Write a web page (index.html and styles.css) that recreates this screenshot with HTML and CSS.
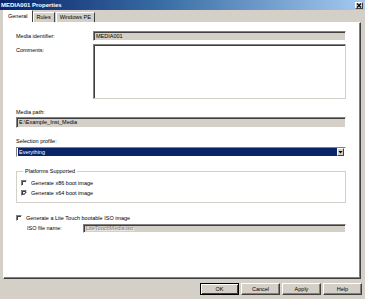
FILE: index.html
```html
<!DOCTYPE html>
<html lang="en">
<head>
    <meta charset="UTF-8">
    <meta name="viewport" content="width=device-width, initial-scale=1.0">
    <title>MEDIA001 Properties</title>
    <link rel="stylesheet" href="styles.css">
</head>
<body>
    <div class="window">
        <div class="titlebar">
            <span class="title">MEDIA001 Properties</span>
            <span class="close-btn">
                <svg width="6" height="5" viewBox="0 0 6 5"><path d="M1 0.5 L5 4.5 M5 0.5 L1 4.5" stroke="#000" stroke-width="1.1"/></svg>
            </span>
        </div>

        <div class="tabs">
            <div class="tab active">General</div>
            <div class="tab">Rules</div>
            <div class="tab">Windows PE</div>
        </div>

        <div class="panel">
            <div class="row first">
                <label class="label">Media identifier:</label>
                <div class="field disabled">MEDIA001</div>
            </div>

            <div class="row top">
                <label class="label pad">Comments:</label>
                <div class="field textarea"></div>
            </div>

            <div class="caption gap">Media path:</div>
            <div class="field disabled wide">E:\Example_Inst_Media</div>

            <div class="caption gap">Selection profile:</div>
            <div class="dropdown">
                <span class="selected">Everything</span>
                <span class="drop-btn">
                    <svg width="5" height="3" viewBox="0 0 5 3"><path d="M0.5 0 L4.5 0 L2.5 2.5 Z" fill="#000"/></svg>
                </span>
            </div>

            <fieldset class="group">
                <legend>Platforms Supported</legend>
                <div class="check-row">
                    <span class="checkbox"></span>
                    <span>Generate x86 boot image</span>
                </div>
                <div class="check-row">
                    <span class="checkbox">
                        <svg width="5" height="5" viewBox="0 0 5 5"><path d="M0.6 2.2 L1.9 3.6 L4.4 0.9" stroke="#000" stroke-width="1" fill="none"/></svg>
                    </span>
                    <span>Generate x64 boot image</span>
                </div>
            </fieldset>

            <div class="check-row lite">
                <span class="checkbox"></span>
                <span>Generate a Lite Touch bootable ISO image</span>
            </div>

            <div class="row iso">
                <label class="label small">ISO file name:</label>
                <div class="field disabled greyed">LiteTouchMedia.iso</div>
            </div>
        </div>

        <div class="buttons">
            <button class="default">OK</button>
            <button>Cancel</button>
            <button>Apply</button>
            <button>Help</button>
        </div>
    </div>
</body>
</html>
```

FILE: styles.css
```css
html, body {
    margin: 0;
    padding: 0;
}
body {
    font-family: "Liberation Sans", Arial, sans-serif;
    font-size: 5.5px;
    color: #000;
    background: #d4d0c8;
    width: 365px;
    height: 299px;
    overflow: hidden;
}
.window {
    display: flex;
    flex-direction: column;
    height: 299px;
}
.titlebar {
    height: 10px;
    display: flex;
    align-items: center;
    justify-content: space-between;
    padding: 0 2px 0 1px;
    background: linear-gradient(to right, #0a246a, #3a6ea5 45%, #a6caf0);
}
.title {
    color: #fff;
    font-weight: bold;
    font-size: 6px;
    line-height: 10px;
}
.close-btn {
    width: 8px;
    height: 7px;
    display: flex;
    align-items: center;
    justify-content: center;
    background: #d4d0c8;
    border: 1px solid;
    border-color: #fff #404040 #404040 #fff;
    box-sizing: border-box;
}
.tabs {
    height: 12px;
    display: flex;
    align-items: flex-end;
    padding-left: 3px;
}
.tab {
    height: 10px;
    line-height: 9px;
    padding: 0 3px;
    border: 1px solid;
    border-color: #fff #404040 transparent #fff;
    border-bottom: none;
    box-sizing: border-box;
    margin-right: 1px;
    background: #d4d0c8;
}
.tab.active {
    height: 12px;
    line-height: 11px;
    padding: 0 4px;
    background: #fff;
    margin-right: 0;
}
.panel {
    height: 257px;
    margin: 0 4px 0 3px;
    background: #fff;
    border: 1px solid;
    border-color: #fff #404040 #404040 #fff;
    box-shadow: inset -1px -1px 0 #808080;
    box-sizing: border-box;
    padding: 0 14px 0 12px;
}
.row {
    display: flex;
    align-items: center;
    height: 10px;
}
.row.first {
    margin-top: 8px;
}
.row.top {
    align-items: flex-start;
    height: auto;
    margin-top: 3px;
}
.label {
    width: 77px;
    flex: none;
    line-height: 7px;
}
.label.pad {
    padding-top: 3px;
}
.label.small {
    width: 56px;
    padding-left: 11px;
}
.field {
    flex: 1;
    height: 10px;
    line-height: 8px;
    padding-left: 2px;
    box-sizing: border-box;
    border: 1px solid;
    border-color: #808080 #fff #fff #808080;
    box-shadow: inset 1px 1px 0 #404040;
    white-space: nowrap;
    overflow: hidden;
}
.field.disabled {
    background: #d4d0c8;
}
.field.textarea {
    height: 55px;
    background: #fff;
    border-color: #808080 #d4d0c8 #d4d0c8 #808080;
}
.field.wide {
    height: 11px;
    line-height: 9px;
    margin-top: 1px;
}
.field.greyed {
    color: #808080;
    text-shadow: 1px 1px 0 #fff;
}
.caption {
    line-height: 7px;
}
.caption.gap {
    margin-top: 10px;
}
.dropdown {
    margin-top: 2px;
    height: 10px;
    display: flex;
    align-items: center;
    box-sizing: border-box;
    border: 1px solid;
    border-color: #808080 #fff #fff #808080;
    background: #fff;
    padding: 0 1px 0 1px;
}
.selected {
    flex: 1;
    background: #0a246a;
    color: #fff;
    height: 8px;
    line-height: 8px;
    padding-left: 1px;
}
.drop-btn {
    width: 7px;
    height: 8px;
    display: flex;
    align-items: center;
    justify-content: center;
    box-sizing: border-box;
    background: #d4d0c8;
    border: 1px solid;
    border-color: #fff #404040 #404040 #fff;
}
.group {
    margin: 11px 0 0 0;
    padding: 3px 0 5px 4px;
    border: 1px solid #d4d0c8;
    height: 35px;
    box-sizing: border-box;
}
.group legend {
    padding: 0 2px;
    margin-left: 2px;
    line-height: 7px;
}
.check-row {
    display: flex;
    align-items: center;
    gap: 4px;
    height: 10px;
    line-height: 7px;
}
.checkbox {
    width: 6px;
    height: 6px;
    flex: none;
    box-sizing: border-box;
    border: 1px solid;
    border-color: #808080 #fff #fff #808080;
    box-shadow: inset 1px 1px 0 #404040, 0 0 0 0 #d4d0c8;
    background: #fff;
    display: flex;
    align-items: center;
    justify-content: center;
}
.checkbox svg {
    flex: none;
}
.check-row.lite {
    margin-top: 10px;
}
.row.iso {
    margin-top: 1px;
    height: 9px;
}
.row.iso .field {
    height: 9px;
    line-height: 7px;
}
.buttons {
    display: flex;
    justify-content: flex-end;
    gap: 2px;
    padding: 4px 3px 0 0;
}
button {
    width: 39px;
    height: 12px;
    padding: 0;
    font-family: "Liberation Sans", Arial, sans-serif;
    font-size: 5.5px;
    color: #000;
    background: #d4d0c8;
    border: 1px solid;
    border-color: #fff #404040 #404040 #fff;
    box-shadow: inset -1px -1px 0 #808080;
    box-sizing: border-box;
}
button.default {
    outline: 1px solid #000;
    outline-offset: -1px;
    border-color: #000;
    box-shadow: inset 1px 1px 0 #fff, inset -1px -1px 0 #404040;
}
```
